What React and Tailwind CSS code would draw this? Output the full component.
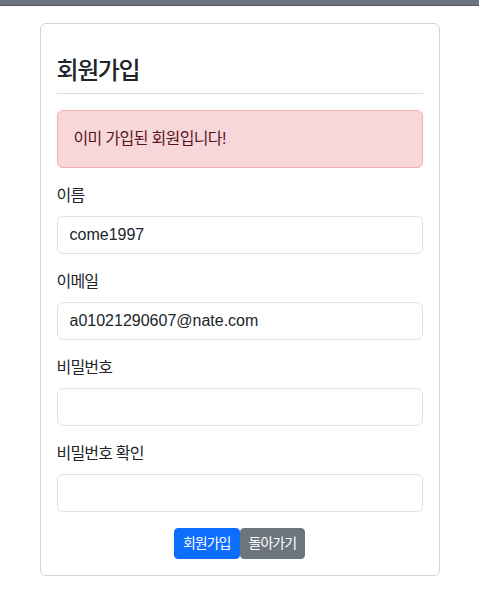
export default function App() {
  const fields = [
    { label: '이름', value: 'come1997' },
    { label: '이메일', value: 'a01021290607@nate.com' },
    { label: '비밀번호', value: '' },
    { label: '비밀번호 확인', value: '' },
  ]

  return (
    <div
      className="min-h-screen bg-white text-[#212529] text-base leading-6"
      style={{ fontFamily: '"Liberation Sans", "Noto Sans CJK KR", sans-serif' }}
    >
      {/* top bar */}
      <div className="h-[6px] bg-[#6c757d] border-b border-[#4f555b]" />

      <div className="flex justify-center pt-[17px]">
        <div className="w-[400px] border border-[#d2d3d4] rounded-[6px] p-4">
          <h4 className="mt-4 mb-2 text-2xl leading-[29px] font-medium tracking-[-0.06em]">회원가입</h4>
          <hr className="mb-4 border-t border-[#dcdcdc]" />

          <div className="mb-4 px-4 py-4 rounded-[6px] border border-[#f1aeb5] bg-[#f8d7da] text-[#58151c] tracking-[-0.04em]">
            이미 가입된 회원입니다!
          </div>

          {fields.map(({ label, value }) => (
            <div key={label} className="mb-4">
              <label className="block mb-2 tracking-[-0.05em]">{label}</label>
              <input
                type={label.startsWith('비밀번호') ? 'password' : 'text'}
                defaultValue={value}
                className="block w-full h-[38px] px-3 py-1.5 border border-[#dee2e6] rounded-[6px] bg-white text-[#212529] outline-none"
              />
            </div>
          ))}

          <div className="flex justify-center">
            <button className="h-[31px] px-2 text-sm leading-[21px] tracking-[-0.07em] text-white bg-[#0d6efd] border border-[#0d6efd] rounded-[4px]">
              회원가입
            </button>
            <button className="h-[31px] px-2 text-sm leading-[21px] tracking-[-0.07em] text-white bg-[#6c757d] border border-[#6c757d] rounded-[4px]">
              돌아가기
            </button>
          </div>
        </div>
      </div>
    </div>
  )
}
